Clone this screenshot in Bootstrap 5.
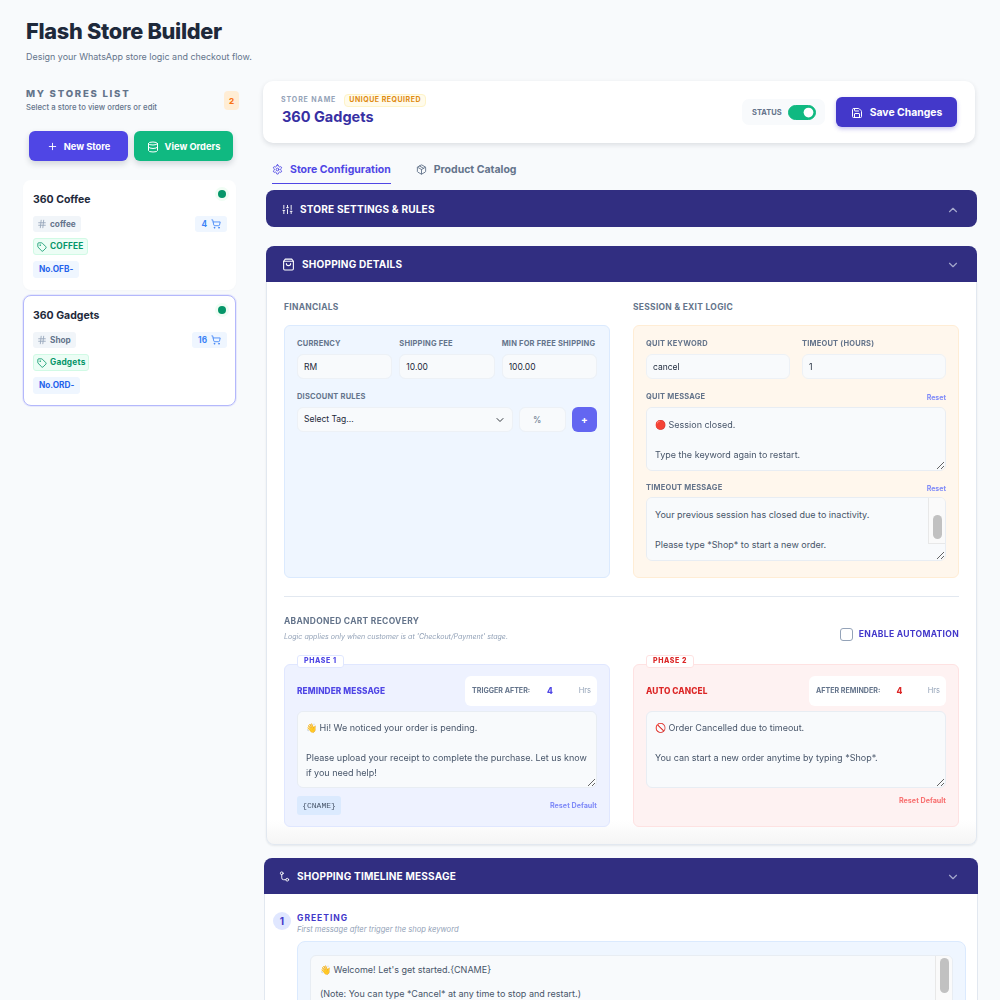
<!DOCTYPE html>
<html lang="en">
<head>
<meta charset="utf-8">
<title>Flash Store Builder</title>
<link href="https://cdn.jsdelivr.net/npm/bootstrap@5.3.0/dist/css/bootstrap.min.css" rel="stylesheet">
<style>
html,body{height:100%;overflow:hidden}
body{background:#f8fafc;font-family:Inter,"Noto Sans",sans-serif;color:#1e293b}
.ico{fill:none;stroke:currentColor;stroke-width:2;stroke-linecap:round;stroke-linejoin:round;flex:none}
.app-shell{height:1000px;overflow:hidden}
.app-head{height:81px;padding:19px 0 0 26px}
.app-title{font-size:21.75px;font-weight:800;line-height:25px;margin:0;color:#1e293b;letter-spacing:-.3px}
.app-sub{font-size:8.95px;color:#64748b;margin:7px 0 0;line-height:12px;font-weight:400}
.side-col{width:216px;margin-left:23px;flex:none;padding-top:7px}
.main-col{width:715px;margin-left:24px;flex:none}
.side-head{padding-left:3px;height:24px}
.side-title{font-size:9.6px;font-weight:800;letter-spacing:1.75px;color:#64748b;line-height:12px}
.side-sub{font-size:7.75px;color:#64748b;line-height:11px;margin-top:2px;font-weight:500}
.side-count{width:15px;height:19px;background:#ffedd5;color:#f97316;font-size:8px;font-weight:800;border-radius:4px;margin-top:3px}
.side-btns{padding:19px 6px 0;gap:6px}
.act-btn{flex:1;height:30px;border:0;border-radius:6px;color:#fff;font-size:9.25px;font-weight:700;gap:6px;padding:1px 0 0;box-shadow:0 3px 6px rgba(15,23,42,.16)}
.act-indigo{background:#4f46e5}
.act-green{background:#10b981}
.store-card{width:213px;height:110px;background:#fff;border-radius:8px;padding:13px 9px 0 10px;margin-top:5px;position:relative;box-shadow:0 1px 2px rgba(15,23,42,.02)}
.store-list{margin-top:19px}
.store-list .store-card:first-child{margin-top:0}
.store-card.is-on{height:111px;border:1px solid #b4b8fb;padding:13px 8px 0 9px;box-shadow:0 0 0 1px rgba(180,184,251,.25)}
.store-name{font-size:10.5px;font-weight:700;color:#1e293b;line-height:13px;margin-bottom:10px}
.store-dot{position:absolute;top:10px;right:10px;width:8px;height:8px;border-radius:50%;background:#059669;box-shadow:0 0 0 3px #f0fdf4}
.store-card.is-on .store-dot{right:9px}
.chip{display:inline-flex;align-items:center;height:17px;padding:0 5px;border-radius:3px;font-size:8.25px;font-weight:700;gap:4px}
.chip-line{margin-bottom:6px;display:flex}
.chip-gray{background:#f1f5f9;color:#64748b;height:16px;gap:3px;padding:0 5px 0 4px}
.chip-gray .ico{color:#94a3b8}
.chip-green{background:#ecfdf5;color:#059669;border:1px solid #d1fae5;font-size:8.3px;letter-spacing:.2px;gap:3px;padding:0 3px}
.chip-blue{background:#eff6ff;color:#2563eb;border:1px solid #eff6ff}
.chip-count{background:#eff6ff;color:#3b82f6;height:16px;padding:0 6px}
.top-bar{width:712px;height:62px;background:#fff;border-radius:10px;box-shadow:0 2px 5px rgba(15,23,42,.12);padding:0 18px}
.sn-block{padding-bottom:5px}
.sn-label{font-size:7px;font-weight:700;color:#94a3b8;letter-spacing:.9px}
.sn-flag{font-size:7px;font-weight:700;color:#e08a10;letter-spacing:.5px;background:#fffbeb;border:1px solid #fef3c7;border-radius:4px;height:13px;padding:0 4px;margin-left:8px}
.sn-value{font-size:14.5px;font-weight:700;color:#3730a3;line-height:17px;margin:1px 0 0 1px}
.status-pill{width:83px;height:26px;margin:0;min-height:0;background:#f8fafc;border-radius:7px;font-size:7.5px;font-weight:700;color:#64748b;padding:0 9px 0 10px}
.status-txt{padding-top:1px}
.status-pill .form-check-input{width:28px;height:15px;margin:0;background-color:#10b981;border-color:#10b981;float:none}
.save-btn{width:121px;height:30px;background:#4338ca;border:0;border-radius:6px;color:#fff;font-size:10.4px;font-weight:700;gap:7px;padding:1px 0 0;margin-left:11px;box-shadow:0 2px 4px rgba(67,56,202,.3)}
.tab-row{margin:12px 0 0 9px;height:29px;gap:25px}
.tab-item{font-size:10.5px;font-weight:700;color:#64748b;gap:7px;height:29px;border-bottom:1px solid transparent;background:none;border-top:0;border-left:0;border-right:0;padding:1px 0 0}
.tab-item.is-on{color:#4f46e5;border-bottom-color:#4f46e5}
.sec-head{height:36px;background:#312e81;color:#fff;padding:1px 17px 0 16px;font-size:10.05px;font-weight:700;letter-spacing:.2px;gap:7px}
.sec-head .tail{margin-left:auto;color:#a5a8cc}
.sec-closed{margin:6px 1px 0 3px;height:37px;border-radius:8px;padding-top:2px}
.sec-wrap{margin:19px 1px 0 3px}
.sec-wrap .sec-head{border-radius:8px 8px 0 0}
.sec-body{background:linear-gradient(#fff calc(100% - 24px),#f5f5f5);border:1px solid #e2e8f0;border-top:0;padding:18px 17px 17px;border-radius:0 0 8px 8px;box-shadow:0 1px 2px rgba(15,23,42,.08)}
.sec-time{margin:13px 0 0 1px}
.sec-time .sec-head{border-radius:8px 8px 0 0;padding:1px 18px 0 15px}
.time-body{background:#fff;border:1px solid #e2e8f0;border-top:0;height:200px;padding:18px 11px 0 8px;gap:6px}
.two-col{display:grid;grid-template-columns:1fr 1fr;gap:23px}
.group-title{font-size:8.45px;font-weight:700;letter-spacing:.3px;color:#64748b;line-height:12px;padding-top:1px;margin-bottom:12px}
.pane{border-radius:6px;border:1px solid;padding:13px 12px 12px}
.pane-blue{background:#eff6ff;border-color:#dbeafe}
.pane-orange{background:#fff7ed;border-color:#ffedd5;padding-bottom:16px}
.fld-label{display:block;font-size:7.5px;font-weight:700;letter-spacing:.2px;color:#64748b;line-height:10px;margin:0 0 5px;white-space:nowrap}
.fld-label.tight{margin-bottom:4px}
.fld-row{gap:7px;margin-bottom:13px}
.fld-row-wide{gap:12px}
.rule-row{gap:6px}
.fld-input.form-control,.fld-input.form-select{height:25px;min-height:25px;background-color:#f8fafc;border:1px solid #edf1f6;border-radius:6px;font-size:8.5px;padding:0 6px;color:#1e293b;box-shadow:none}
.fld-input.form-select{background-size:8px;background-position:right 8px center}
.pct-box.form-control{width:47px;flex:none;text-align:left;padding-left:13px;color:#64748b}
.pct-box.form-control::placeholder{color:#64748b}
.add-btn{width:25px;height:25px;flex:none;background:#6366f1;border:0;border-radius:6px;color:#fff;font-size:10px;font-weight:700;padding:0}
.note-area.form-control{background:#f8fafc;border:1px solid #e8edf3;border-radius:6px;font-size:9px;line-height:15px;padding:9px 8px;color:#475569;box-shadow:none;min-height:0}
.area-64{height:64px;margin-bottom:12px}
.area-holder{position:relative}
.area-holder .note-area{margin:0}
.bar-track{position:absolute;top:1px;right:1px;width:17px;height:46px;background:#fafafa;border-left:1px solid #e8e8e8;border-bottom:1px solid #e8e8e8;border-top-right-radius:5px}
.bar-thumb{position:absolute;left:4px;top:17px;width:9px;height:24px;background:#c1c1c1;border-radius:5px}
.track-tall{height:100px;border-bottom:0}
.track-tall .bar-thumb{top:2px;height:35px}
.reset-link{font-size:7px;font-weight:700;color:#818cf8;text-decoration:none;line-height:11px}
.rule-line{border-top:1px solid #e2e8f0;margin:18px 0}
.aban-title{font-size:8.45px;font-weight:700;letter-spacing:.3px;color:#64748b;line-height:12px}
.aban-sub{font-size:7.1px;font-style:italic;color:#94a3b8;line-height:10px;margin-top:5px}
.enable-line{gap:6px;font-size:8.55px;font-weight:700;letter-spacing:.3px;color:#4338ca;margin:11px 0 0}
.enable-line .form-check-input{width:13px;height:13px;margin:0;border-radius:3px;border:1px solid #94a3b8}
.phase-wrap{margin-top:22px}
.phase-pane{position:relative;height:163px;padding:11px 12px 0;border-radius:6px;border:1px solid}
.phase-a{background:#eef2ff;border-color:#e0e7ff}
.phase-b{background:#fef2f2;border-color:#fee2e2}
.phase-tag{position:absolute;top:-10px;left:12px;height:13px;background:#fff;border:1px solid #e0e7ff;border-radius:3px;font-size:7px;font-weight:800;letter-spacing:.6px;padding:0 6px;color:#4f46e5}
.phase-b .phase-tag{color:#dc2626;border-color:#fee2e2}
.phase-name{font-size:8.3px;font-weight:800;letter-spacing:.1px}
.phase-a .phase-name{color:#4f46e5}
.phase-b .phase-name{color:#dc2626}
.trig-box{width:132px;height:30px;background:#fff;border-radius:6px;padding:0 6px 0 7px;font-size:7.1px;font-weight:700;color:#64748b}
.phase-b .trig-box{width:137px}
.trig-val{flex:1;text-align:center;font-size:8.5px;font-weight:800;padding-right:9px}
.phase-a .trig-val{color:#4f46e5}
.phase-b .trig-val{color:#dc2626}
.trig-unit{font-size:7.5px;font-weight:400;color:#94a3b8}
.area-77.form-control{height:77px;margin-top:5px;padding:8px 5px 8px 8px}
.phase-foot{height:19px;margin-top:8px}
.var-chip{width:44px;height:19px;background:#dbeafe;border-radius:3px;font-family:"Liberation Mono",monospace;font-size:8px;color:#475569}
.phase-b .reset-link{color:#f87171}
.reset-strong{font-size:7.2px;line-height:9px}
.step-num{width:18px;height:18px;border-radius:50%;background:#e0e7ff;color:#4338ca;font-size:10px;font-weight:700;flex:none}
.step-name{font-size:8.5px;font-weight:700;letter-spacing:1px;color:#4338ca;line-height:11px;margin-top:1px}
.step-sub{font-size:7.6px;font-style:italic;color:#94a3b8;line-height:11px}
.step-pane{background:#eff6ff;border:1px solid #dbeafe;border-radius:8px;padding:13px 12px;margin-top:6px;height:120px}
.area-time.form-control{height:100px;line-height:12px;padding:8px 9px;font-size:9px;resize:none}
</style>
</head>
<body>
<svg class="d-none" aria-hidden="true">
<symbol id="i-plus" viewBox="0 0 24 24"><path d="M5 12h14M12 5v14"/></symbol>
<symbol id="i-db" viewBox="0 0 24 24"><ellipse cx="12" cy="5" rx="9" ry="3"/><path d="M3 5V19A9 3 0 0 0 21 19V5"/><path d="M3 12A9 3 0 0 0 21 12"/></symbol>
<symbol id="i-hash" viewBox="0 0 24 24"><path d="M4 9h16M4 15h16M10 3 8 21M16 3l-2 18"/></symbol>
<symbol id="i-tag" viewBox="0 0 24 24"><path d="M12.586 2.586A2 2 0 0 0 11.172 2H4a2 2 0 0 0-2 2v7.172a2 2 0 0 0 .586 1.414l8.704 8.704a2.426 2.426 0 0 0 3.42 0l6.58-6.58a2.426 2.426 0 0 0 0-3.42z"/><circle cx="7.5" cy="7.5" r=".5"/></symbol>
<symbol id="i-cart" viewBox="0 0 24 24"><circle cx="8" cy="21" r="1"/><circle cx="19" cy="21" r="1"/><path d="M2.05 2.05h2l2.66 12.42a2 2 0 0 0 2 1.58h9.78a2 2 0 0 0 1.95-1.57l1.65-7.43H5.12"/></symbol>
<symbol id="i-save" viewBox="0 0 24 24"><path d="M15.2 3a2 2 0 0 1 1.4.6l3.8 3.8a2 2 0 0 1 .6 1.4V19a2 2 0 0 1-2 2H5a2 2 0 0 1-2-2V5a2 2 0 0 1 2-2z"/><path d="M17 21v-7a1 1 0 0 0-1-1H8a1 1 0 0 0-1 1v7"/><path d="M7 3v4a1 1 0 0 0 1 1h7"/></symbol>
<symbol id="i-gear" viewBox="0 0 24 24"><path d="M12.22 2h-.44a2 2 0 0 0-2 2v.18a2 2 0 0 1-1 1.73l-.43.25a2 2 0 0 1-2 0l-.15-.08a2 2 0 0 0-2.73.73l-.22.38a2 2 0 0 0 .73 2.73l.15.1a2 2 0 0 1 1 1.72v.51a2 2 0 0 1-1 1.74l-.15.09a2 2 0 0 0-.73 2.73l.22.38a2 2 0 0 0 2.73.73l.15-.08a2 2 0 0 1 2 0l.43.25a2 2 0 0 1 1 1.73V20a2 2 0 0 0 2 2h.44a2 2 0 0 0 2-2v-.18a2 2 0 0 1 1-1.73l.43-.25a2 2 0 0 1 2 0l.15.08a2 2 0 0 0 2.73-.73l.22-.39a2 2 0 0 0-.73-2.73l-.15-.08a2 2 0 0 1-1-1.74v-.5a2 2 0 0 1 1-1.74l.15-.09a2 2 0 0 0 .73-2.73l-.22-.38a2 2 0 0 0-2.73-.73l-.15.08a2 2 0 0 1-2 0l-.43-.25a2 2 0 0 1-1-1.73V4a2 2 0 0 0-2-2z"/><circle cx="12" cy="12" r="3"/></symbol>
<symbol id="i-box" viewBox="0 0 24 24"><path d="m7.5 4.27 9 5.15"/><path d="M21 8a2 2 0 0 0-1-1.73l-7-4a2 2 0 0 0-2 0l-7 4A2 2 0 0 0 3 8v8a2 2 0 0 0 1 1.73l7 4a2 2 0 0 0 2 0l7-4A2 2 0 0 0 21 16Z"/><path d="m3.3 7 8.7 5 8.7-5"/><path d="M12 22V12"/></symbol>
<symbol id="i-sliders" viewBox="0 0 24 24"><path d="M4 21v-7M4 10V3M12 21v-9M12 8V3M20 21v-5M20 12V3M2 14h4M10 8h4M18 16h4"/></symbol>
<symbol id="i-bag" viewBox="0 0 24 24"><path d="M6 2 3 6v14a2 2 0 0 0 2 2h14a2 2 0 0 0 2-2V6l-3-4Z"/><path d="M3 6h18"/><path d="M16 10a4 4 0 0 1-8 0"/></symbol>
<symbol id="i-route" viewBox="0 0 24 24"><circle cx="6" cy="5" r="3"/><path d="M6 8v7a4 4 0 0 0 4 4h5"/><circle cx="18" cy="19" r="3"/></symbol>
<symbol id="i-up" viewBox="0 0 24 24"><path d="m18 15-6-6-6 6"/></symbol>
<symbol id="i-down" viewBox="0 0 24 24"><path d="m6 9 6 6 6-6"/></symbol>
</svg>

<div class="app-shell">
  <header class="app-head">
    <h1 class="app-title">Flash Store Builder</h1>
    <p class="app-sub">Design your WhatsApp store logic and checkout flow.</p>
  </header>
  <div class="d-flex">
    <aside class="side-col">
      <div class="side-head d-flex justify-content-between align-items-start">
        <div>
          <div class="side-title">MY STORES LIST</div>
          <div class="side-sub">Select a store to view orders or edit</div>
        </div>
        <span class="side-count d-flex align-items-center justify-content-center">2</span>
      </div>
      <div class="side-btns d-flex">
        <button class="act-btn act-indigo d-flex align-items-center justify-content-center" type="button"><svg class="ico" width="11" height="11"><use href="#i-plus"/></svg>New Store</button>
        <button class="act-btn act-green d-flex align-items-center justify-content-center" type="button"><svg class="ico" width="12" height="12"><use href="#i-db"/></svg>View Orders</button>
      </div>
      <div class="store-list">
        <div class="store-card">
          <span class="store-dot"></span>
          <div class="store-name">360 Coffee</div>
          <div class="chip-line justify-content-between">
            <span class="chip chip-gray"><svg class="ico" width="10" height="10"><use href="#i-hash"/></svg>coffee</span>
            <span class="chip chip-count">4 <svg class="ico" width="10" height="10"><use href="#i-cart"/></svg></span>
          </div>
          <div class="chip-line"><span class="chip chip-green"><svg class="ico" width="10" height="10"><use href="#i-tag"/></svg>COFFEE</span></div>
          <div class="chip-line"><span class="chip chip-blue">No.OFB-</span></div>
        </div>
        <div class="store-card is-on">
          <span class="store-dot"></span>
          <div class="store-name">360 Gadgets</div>
          <div class="chip-line justify-content-between">
            <span class="chip chip-gray"><svg class="ico" width="10" height="10"><use href="#i-hash"/></svg>Shop</span>
            <span class="chip chip-count">16 <svg class="ico" width="10" height="10"><use href="#i-cart"/></svg></span>
          </div>
          <div class="chip-line"><span class="chip chip-green"><svg class="ico" width="10" height="10"><use href="#i-tag"/></svg>Gadgets</span></div>
          <div class="chip-line"><span class="chip chip-blue">No.ORD-</span></div>
        </div>
      </div>
    </aside>

    <main class="main-col">
      <div class="top-bar d-flex align-items-center justify-content-between">
        <div class="sn-block">
          <div class="d-flex align-items-center"><span class="sn-label">STORE NAME</span><span class="sn-flag d-flex align-items-center">UNIQUE REQUIRED</span></div>
          <div class="sn-value">360 Gadgets</div>
        </div>
        <div class="d-flex align-items-center">
          <div class="status-pill form-check form-switch d-flex align-items-center justify-content-between">
            <span class="status-txt">STATUS</span>
            <input class="form-check-input" type="checkbox" role="switch" checked aria-label="Status">
          </div>
          <button class="save-btn d-flex align-items-center justify-content-center" type="button"><svg class="ico" width="12" height="12"><use href="#i-save"/></svg>Save Changes</button>
        </div>
      </div>

      <div class="tab-row d-flex">
        <button class="tab-item is-on d-flex align-items-center" type="button"><svg class="ico" width="11" height="11"><use href="#i-gear"/></svg>Store Configuration</button>
        <button class="tab-item d-flex align-items-center" type="button"><svg class="ico" width="11" height="11"><use href="#i-box"/></svg>Product Catalog</button>
      </div>

      <div class="sec-head sec-closed d-flex align-items-center"><svg class="ico" width="11" height="11"><use href="#i-sliders"/></svg>STORE SETTINGS &amp; RULES<svg class="ico tail" width="14" height="14"><use href="#i-up"/></svg></div>

      <section class="sec-wrap">
        <div class="sec-head d-flex align-items-center"><svg class="ico" width="13" height="13"><use href="#i-bag"/></svg>SHOPPING DETAILS<svg class="ico tail" width="14" height="14"><use href="#i-down"/></svg></div>
        <div class="sec-body">
          <div class="two-col">
            <div class="d-flex flex-column">
              <div class="group-title">FINANCIALS</div>
              <div class="pane pane-blue flex-fill">
                <div class="fld-row d-flex">
                  <div class="flex-fill w-100"><label class="fld-label">CURRENCY</label><input class="fld-input form-control" value="RM"></div>
                  <div class="flex-fill w-100"><label class="fld-label">SHIPPING FEE</label><input class="fld-input form-control" value="10.00"></div>
                  <div class="flex-fill w-100"><label class="fld-label">MIN FOR FREE SHIPPING</label><input class="fld-input form-control" value="100.00"></div>
                </div>
                <label class="fld-label">DISCOUNT RULES</label>
                <div class="rule-row d-flex">
                  <select class="fld-input form-select"><option>Select Tag...</option></select>
                  <input class="fld-input form-control pct-box" placeholder="%">
                  <button class="add-btn" type="button">+</button>
                </div>
              </div>
            </div>
            <div class="d-flex flex-column">
              <div class="group-title">SESSION &amp; EXIT LOGIC</div>
              <div class="pane pane-orange flex-fill">
                <div class="fld-row fld-row-wide d-flex">
                  <div class="flex-fill w-100"><label class="fld-label">QUIT KEYWORD</label><input class="fld-input form-control" value="cancel"></div>
                  <div class="flex-fill w-100"><label class="fld-label">TIMEOUT (HOURS)</label><input class="fld-input form-control" value="1"></div>
                </div>
                <div class="d-flex justify-content-between"><label class="fld-label">QUIT MESSAGE</label><a class="reset-link" href="#">Reset</a></div>
                <textarea class="note-area form-control area-64">🔴 Session closed.

Type the keyword again to restart.</textarea>
                <div class="d-flex justify-content-between"><label class="fld-label tight">TIMEOUT MESSAGE</label><a class="reset-link" href="#">Reset</a></div>
                <div class="area-holder">
                  <textarea id="timeoutMsg" class="note-area form-control area-64">⏰ Time out.


Your previous session has closed due to inactivity.

Please type *Shop* to start a new order.</textarea>
                  <div class="bar-track"><div class="bar-thumb"></div></div>
                </div>
              </div>
            </div>
          </div>

          <div class="rule-line"></div>

          <div class="d-flex justify-content-between align-items-center">
            <div>
              <div class="aban-title">ABANDONED CART RECOVERY</div>
              <div class="aban-sub">Logic applies only when customer is at 'Checkout/Payment' stage.</div>
            </div>
            <label class="enable-line d-flex align-items-center"><input class="form-check-input" type="checkbox">ENABLE AUTOMATION</label>
          </div>

          <div class="two-col phase-wrap">
            <div class="phase-pane phase-a">
              <span class="phase-tag d-flex align-items-center">PHASE 1</span>
              <div class="d-flex justify-content-between align-items-center">
                <span class="phase-name">REMINDER MESSAGE</span>
                <div class="trig-box d-flex align-items-center"><span>TRIGGER AFTER:</span><span class="trig-val">4</span><span class="trig-unit">Hrs</span></div>
              </div>
              <textarea class="note-area form-control area-77">👋 Hi! We noticed your order is pending.

Please upload your receipt to complete the purchase. Let us know if you need help!</textarea>
              <div class="phase-foot d-flex justify-content-between align-items-center">
                <span class="var-chip d-flex align-items-center justify-content-center">{CNAME}</span>
                <a class="reset-link reset-strong" href="#">Reset Default</a>
              </div>
            </div>
            <div class="phase-pane phase-b">
              <span class="phase-tag d-flex align-items-center">PHASE 2</span>
              <div class="d-flex justify-content-between align-items-center">
                <span class="phase-name">AUTO CANCEL</span>
                <div class="trig-box d-flex align-items-center"><span>AFTER REMINDER:</span><span class="trig-val">4</span><span class="trig-unit">Hrs</span></div>
              </div>
              <textarea class="note-area form-control area-77">🚫 Order Cancelled due to timeout.

You can start a new order anytime by typing *Shop*.</textarea>
              <div class="phase-foot d-flex justify-content-end align-items-start">
                <a class="reset-link reset-strong" href="#">Reset Default</a>
              </div>
            </div>
          </div>
        </div>
      </section>

      <section class="sec-time">
        <div class="sec-head d-flex align-items-center"><svg class="ico" width="11" height="11"><use href="#i-route"/></svg>SHOPPING TIMELINE MESSAGE<svg class="ico tail" width="14" height="14"><use href="#i-down"/></svg></div>
        <div class="time-body d-flex">
          <span class="step-num d-flex align-items-center justify-content-center">1</span>
          <div class="flex-fill">
            <div class="step-name">GREETING</div>
            <div class="step-sub">First message after trigger the shop keyword</div>
            <div class="step-pane">
              <div class="area-holder">
                <textarea class="note-area form-control area-time">👋 Welcome! Let's get started.{CNAME}

(Note: You can type *Cancel* at any time to stop and restart.)</textarea>
                <div class="bar-track track-tall"><div class="bar-thumb"></div></div>
              </div>
            </div>
          </div>
        </div>
      </section>
    </main>
  </div>
</div>
<script src="https://cdn.jsdelivr.net/npm/bootstrap@5.3.0/dist/js/bootstrap.bundle.min.js"></script>
<script>document.getElementById('timeoutMsg').scrollTop=45;</script>
</body>
</html>
